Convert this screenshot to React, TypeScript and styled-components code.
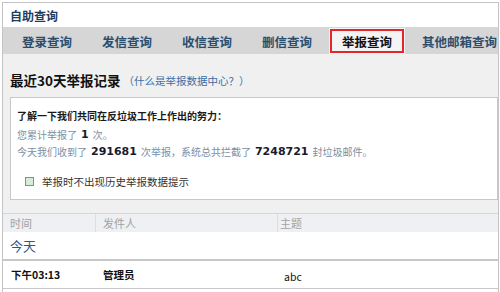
import React from "react";
import styled, { createGlobalStyle, css } from "styled-components";

const Global = createGlobalStyle`
  html, body { margin: 0; padding: 0; background: #fff; }
  body { font-family: "Noto Sans CJK SC", "Noto Sans", sans-serif; }
  * { box-sizing: border-box; }
`;

const Frame = styled.div`
  margin: 2px 1px 0 2px;
  width: 497px;
  height: 290px;
  border: 1px solid #c4c4c4;
  border-bottom: none;
  overflow: hidden;
  background: #fff;
`;

const TitleBar = styled.div`
  height: 24px;
  display: flex;
  align-items: center;
  padding-left: 7px;
  font-size: 12px;
  font-weight: 700;
  color: #1c3d5e;
`;

const TabBar = styled.div`
  height: 27px;
  background: #d6d6d6;
  display: flex;
  align-items: flex-end;
  gap: 4px;
  padding-left: 6px;
  white-space: nowrap;
`;

const Tab = styled.div<{ $active?: boolean }>`
  height: 26px;
  padding: 0 13px;
  display: flex;
  align-items: center;
  font-size: 12.5px;
  font-weight: 700;
  color: #2b4e6e;
  flex-shrink: 0;
  ${(p) =>
    p.$active &&
    css`
      background: #f4f4f4;
      color: #111;
      outline: 2px solid #e3262b;
      outline-offset: -3px;
    `}
`;

const Content = styled.div`
  background: #f0f0f0;
  padding: 16px 0 13px 7px;
`;

const Heading = styled.div`
  height: 20px;
  display: flex;
  align-items: center;
  gap: 3px;
  margin-bottom: 7px;
`;

const HeadingTitle = styled.span`
  font-size: 13.5px;
  font-weight: 700;
  color: #111;
`;

const HeadingLink = styled.span`
  font-size: 10.5px;
  color: #3b6ea5;
`;

const InfoBox = styled.div`
  height: 103px;
  background: #fff;
  border: 1px solid #c8c8c8;
  padding: 9px 0 0 6px;
  font-size: 10px;
`;

const Line = styled.div<{ $tone?: "dark" | "muted"; $gap?: number }>`
  height: 17px;
  margin-top: ${(p) => p.$gap ?? 0}px;
  display: flex;
  align-items: center;
  white-space: nowrap;
  color: ${(p) => (p.$tone === "dark" ? "#1a1a1a" : "#7b8ea3")};
  font-weight: ${(p) => (p.$tone === "dark" ? 600 : 400)};
`;

const Num = styled.b`
  font-family: "DejaVu Sans", sans-serif;
  font-size: 11px;
  font-weight: 700;
  color: #1a1a2e;
  margin: 0 4px;
`;

const CheckRow = styled.label`
  display: flex;
  align-items: center;
  gap: 8px;
  margin: 14px 0 0 8px;
  font-size: 10.5px;
  color: #333;
`;

const Box = styled.span`
  width: 9px;
  height: 9px;
  border: 1px solid #8a8a8a;
  background: #d9ecd9;
`;

const Grid = styled.div`
  display: grid;
  grid-template-columns: 92px 182px 1fr;
`;

const HeaderRow = styled(Grid)`
  height: 19px;
  background: #eef0f3;
  border-top: 1px solid #d6d6d6;
  font-size: 11px;
  color: #a2a2a2;
`;

const HeadCell = styled.div<{ $pad: number; $sep?: boolean }>`
  display: flex;
  align-items: center;
  padding-left: ${(p) => p.$pad}px;
  border-left: ${(p) => (p.$sep ? "1px solid #dcdee2" : "none")};
`;

const GroupRow = styled.div`
  height: 29px;
  display: flex;
  align-items: center;
  padding-left: 7px;
  font-size: 13px;
  color: #285a84;
  border-bottom: 2px solid #c8c8c8;
`;

const DataRow = styled(Grid)`
  height: 28px;
  border-bottom: 1px solid #c8c8c8;
  font-size: 10.5px;
  color: #111;
`;

const Cell = styled.div<{ $pad: number; $bold?: boolean; $drop?: number }>`
  display: flex;
  align-items: center;
  padding-left: ${(p) => p.$pad}px;
  padding-top: ${(p) => p.$drop ?? 0}px;
  font-weight: ${(p) => (p.$bold ? 600 : 400)};
`;

const tabs = ["登录查询", "发信查询", "收信查询", "删信查询", "举报查询", "其他邮箱查询"];

export default function App() {
  return (
    <>
      <Global />
      <Frame>
        <TitleBar>自助查询</TitleBar>
        <TabBar>
          {tabs.map((t) => (
            <Tab key={t} $active={t === "举报查询"}>
              {t}
            </Tab>
          ))}
        </TabBar>
        <Content>
          <Heading>
            <HeadingTitle>最近30天举报记录</HeadingTitle>
            <HeadingLink>（什么是举报数据中心？）</HeadingLink>
          </Heading>
          <InfoBox>
            <Line $tone="dark">了解一下我们共同在反垃圾工作上作出的努力：</Line>
            <Line $gap={2}>
              您累计举报了<Num>1</Num>次。
            </Line>
            <Line>
              今天我们收到了<Num>291681</Num>次举报，系统总共拦截了<Num>7248721</Num>封垃圾邮件。
            </Line>
            <CheckRow>
              <Box />
              举报时不出现历史举报数据提示
            </CheckRow>
          </InfoBox>
        </Content>
        <HeaderRow>
          <HeadCell $pad={7}>时间</HeadCell>
          <HeadCell $pad={7} $sep>
            发件人
          </HeadCell>
          <HeadCell $pad={2} $sep>
            主题
          </HeadCell>
        </HeaderRow>
        <GroupRow>今天</GroupRow>
        <DataRow>
          <Cell $pad={8} $bold>
            下午03:13
          </Cell>
          <Cell $pad={8} $bold>
            管理员
          </Cell>
          <Cell $pad={7} $drop={4}>
            abc
          </Cell>
        </DataRow>
      </Frame>
    </>
  );
}
